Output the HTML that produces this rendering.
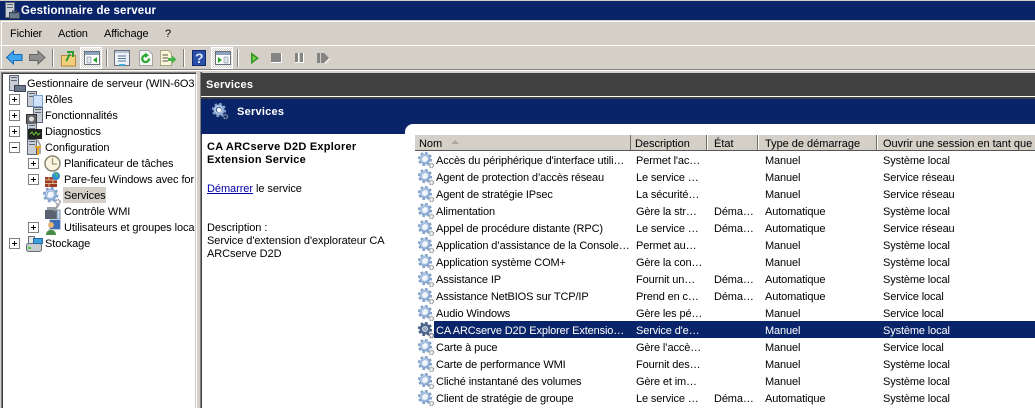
<!DOCTYPE html>
<html><head><meta charset="utf-8"><style>
html,body{margin:0;padding:0;background:#fff}
#p{position:relative;width:1035px;height:408px;overflow:hidden;background:#d4d0c8;font:11px "Liberation Sans",sans-serif;color:#000;letter-spacing:-.13px}
.a{position:absolute}
.t{position:absolute;white-space:nowrap;line-height:13px;height:13px;margin-top:1px}
#tree .t{letter-spacing:-.08px}
.d{letter-spacing:-.06px}
.b{font-weight:bold;letter-spacing:.25px}
.w{color:#fff}
.exp{position:absolute;width:9px;height:9px;border:1px solid #808080;background:#fff}
.exp:before{content:"";position:absolute;left:2px;top:4px;width:5px;height:1px;background:#000}
.exp.p:after{content:"";position:absolute;left:4px;top:2px;width:1px;height:5px;background:#000}
svg{position:absolute;overflow:visible}
.sep{position:absolute;top:49px;width:1px;height:18px;background:#808080;border-right:1px solid #fff}
.press{position:absolute;top:47px;height:20px;width:20px;border:1px solid #fff;background-color:#fff;background-image:conic-gradient(#d4d0c8 25%,#fff 0 50%,#d4d0c8 0 75%,#fff 0);background-size:2px 2px}
.h{position:absolute;top:135px;height:15px;background:#d4d0c8;border-right:1px solid #716f64;box-shadow:1px 0 #fff}
.hd{letter-spacing:-.02px}
</style></head><body><div id="p">
<svg width="0" height="0"><defs>
<g id="gear"><circle cx="7" cy="7" r="5.9" fill="none" stroke="#7f9fca" stroke-width="2.4" stroke-dasharray="2.5 2.13"/><circle cx="7" cy="7" r="4.2" fill="none" stroke="#8aa8d0" stroke-width="2.6"/><circle cx="6.5" cy="6.5" r="3.6" fill="none" stroke="#c2d5ec" stroke-width="1"/><circle cx="7" cy="7" r="2.3" fill="#f1f6fc"/><circle cx="13.5" cy="13.5" r="2" fill="none" stroke="#8f98a4" stroke-width="1.6" stroke-dasharray="1.2 .6"/></g>
<g id="gear2"><circle cx="7" cy="7" r="5.9" fill="none" stroke="#445a80" stroke-width="2.4" stroke-dasharray="2.5 2.13"/><circle cx="7" cy="7" r="4.2" fill="none" stroke="#4d648c" stroke-width="2.6"/><circle cx="7" cy="7" r="2.3" fill="#9aa9c2"/><circle cx="13.5" cy="13.5" r="2" fill="none" stroke="#606a7a" stroke-width="1.6" stroke-dasharray="1.2 .6"/></g>
<g id="srv"><rect x="2.5" y=".5" width="9" height="15" fill="#c9ced6" stroke="#5d6674"/><rect x="4" y="2" width="6" height="1" fill="#5d6674"/><rect x="4" y="5" width="6" height="1" fill="#5d6674"/></g>
</defs></svg>

<!-- title bar -->
<div class="a" style="left:0;top:1px;width:1035px;height:19px;background:#0a246a"></div>
<div class="a" style="left:0;top:0;width:1035px;height:1px;background:#d4d0c8"></div>
<div class="a" style="left:0;top:20px;width:1035px;height:1px;background:#d4d0c8"></div>
<div class="a" style="left:1px;top:21px;width:1034px;height:1px;background:#fff"></div>
<div class="a" style="left:1px;top:21px;width:1px;height:49px;background:#fff"></div>
<svg style="left:3px;top:2px" width="16" height="17"><use href="#srv"/><rect x="6.5" y="10.5" width="10" height="6" fill="#6b7a8c" stroke="#3a4454"/><rect x="9.5" y="9" width="4" height="2" fill="none" stroke="#3a4454"/></svg>
<div class="t b w" style="left:21px;top:4px;font-size:11.5px;letter-spacing:.15px">Gestionnaire de serveur</div>

<!-- menu -->
<div class="a" style="left:0;top:45px;width:1035px;height:1px;background:#fff"></div>
<div class="a" style="left:0;top:69px;width:1035px;height:1px;background:#808080"></div>
<div class="a" style="left:0;top:70px;width:1035px;height:1px;background:#fff"></div>
<div class="t" style="left:10px;top:27px">Fichier</div>
<div class="t" style="left:58px;top:27px">Action</div>
<div class="t" style="left:104px;top:27px">Affichage</div>
<div class="t" style="left:165px;top:27px">?</div>

<!-- toolbar -->
<svg style="left:6px;top:50px" width="17" height="15"><path d="M.5 7.5 7.5 1V4.5H16V10.5H7.5V14Z" fill="#3ea6ee" stroke="#1768b5"/></svg>
<svg style="left:29px;top:50px" width="17" height="15"><path d="M16 7.5 9 1V4.5H.5V10.5H9V14Z" fill="#8f8f8f" stroke="#666"/></svg>
<div class="sep" style="left:52px"></div>
<svg style="left:61px;top:49px" width="16" height="18"><path d="M.5 6.5H14.5V17H.5Z" fill="#f2cf7c" stroke="#b08a3a"/><path d="M5 12C7 10 7 7 9 5M6 3H12V8" fill="none" stroke="#2f9e2f" stroke-width="2"/></svg>
<div class="press" style="left:80px"></div>
<svg style="left:84px;top:51px" width="18" height="15"><rect x=".5" y=".5" width="15" height="13" fill="#fff" stroke="#66707c"/><rect x="1" y="1" width="14" height="3" fill="#8aa2bd"/><rect x="3" y="6" width="4" height="6" fill="#dfe7f0" stroke="#7f8b99" stroke-width=".6"/><path d="M13 6V12L9 9Z" fill="#26a326"/></svg>
<div class="sep" style="left:106px"></div>
<svg style="left:114px;top:50px" width="16" height="16"><rect x=".5" y=".5" width="15" height="15" fill="#eef2f6" stroke="#67717d"/><rect x="1" y="1" width="14" height="2" fill="#b4c3d4"/><path d="M4 6H12M4 8.5H12M4 11H12" stroke="#55779c"/><rect x="5" y="14" width="6" height="1.5" fill="#35b5e8"/></svg>
<svg style="left:139px;top:50px" width="14" height="16"><path d="M.5.5H9.5L13.5 4.5V15.5H.5Z" fill="#f6f6f6" stroke="#a5a5a5"/><path d="M10 8.5A3.4 3.4 0 1 1 7 5.3" fill="none" stroke="#29a72b" stroke-width="2.2"/><path d="M6 2.5 10 5.4 6 8Z" fill="#29a72b"/></svg>
<svg style="left:160px;top:50px" width="17" height="16"><path d="M.5.5H8.5L11.5 3.5V15.5H.5Z" fill="#fbf5d8" stroke="#a5a58a"/><path d="M2.5 5H8M2.5 8H8M2.5 11H8" stroke="#555"/><path d="M8 8H12V5.5L16.5 9.5 12 13.5V11H8Z" fill="#45b449"/></svg>
<div class="sep" style="left:183px"></div>
<svg style="left:192px;top:50px" width="14" height="16"><rect x=".5" y=".5" width="13" height="15" fill="#2a4fa8" stroke="#15296a"/><text x="3" y="13" font-family="Liberation Sans" font-size="14" font-weight="bold" fill="#dfe6f5">?</text></svg>
<div class="press" style="left:211px"></div>
<svg style="left:215px;top:51px" width="18" height="15"><rect x=".5" y=".5" width="15" height="13" fill="#fff" stroke="#66707c"/><rect x="1" y="1" width="14" height="3" fill="#8aa2bd"/><rect x="9" y="6" width="4" height="6" fill="#dfe7f0" stroke="#7f8b99" stroke-width=".6"/><path d="M3 6V12L7 9Z" fill="#26a326"/></svg>
<div class="sep" style="left:237px"></div>
<svg style="left:251px;top:53px" width="8" height="11"><path d="M.8.8V9.6L6.6 5.2Z" fill="#7fd04f" stroke="#2d9a1e" stroke-width="1.6"/></svg>
<div class="a" style="left:271px;top:53px;width:10px;height:9px;background:#848484;border-right:1px solid #fff;border-bottom:1px solid #fff"></div>
<div class="a" style="left:295px;top:53px;width:3px;height:9px;background:#848484;border-right:1px solid #fff;border-bottom:1px solid #fff"></div>
<div class="a" style="left:300px;top:53px;width:3px;height:9px;background:#848484;border-right:1px solid #fff;border-bottom:1px solid #fff"></div>
<svg style="left:317px;top:53px" width="14" height="11"><rect width="3" height="10" fill="#848484"/><path d="M4 0H7L12 5 7 10H4Z" fill="#848484"/><path d="M8 10.5 13 5.3" stroke="#fff"/></svg>

<!-- panes -->
<div class="a" style="left:1px;top:72px;width:1px;height:336px;background:#808080"></div>
<div class="a" style="left:2px;top:73px;width:1px;height:335px;background:#404040"></div>
<div class="a" style="left:1px;top:72px;width:195px;height:1px;background:#808080"></div>
<div class="a" style="left:2px;top:73px;width:194px;height:1px;background:#404040"></div>
<div class="a" style="left:3px;top:74px;width:192px;height:334px;background:#fff;overflow:hidden" id="tree">
 <div class="t" style="left:24px;top:3px;width:168px;overflow:hidden">Gestionnaire de serveur (WIN-6O3I</div>
 <svg style="left:4px;top:1px" width="18" height="17"><use href="#srv"/><rect x="7.5" y="10.5" width="11" height="6" fill="#6b7a8c" stroke="#3a4454"/></svg>
 <div class="exp p" style="left:6px;top:20px"></div><svg style="left:22px;top:17px" width="18" height="17"><use href="#srv"/><rect x="8.5" y="4.5" width="9" height="11" fill="#cfe2f8" stroke="#7aa0d0"/></svg><div class="t" style="left:42px;top:19px">Rôles</div>
 <div class="exp p" style="left:6px;top:36px"></div><svg style="left:22px;top:33px" width="18" height="17"><g transform="translate(6 0)"><use href="#srv"/></g><rect x="1.5" y="7.5" width="10" height="9" fill="#666" stroke="#333"/><circle cx="6.5" cy="12" r="2.5" fill="#ddd"/></svg><div class="t" style="left:42px;top:35px">Fonctionnalités</div>
 <div class="exp p" style="left:6px;top:52px"></div><svg style="left:22px;top:49px" width="18" height="17"><use href="#srv"/><rect x="3" y="6" width="14" height="10" fill="#222"/><path d="M5 11 7 9 9 12 11 9 13 12 15 10" fill="none" stroke="#6c3"/></svg><div class="t" style="left:42px;top:51px">Diagnostics</div>
 <div class="exp" style="left:6px;top:68px"></div><svg style="left:22px;top:65px" width="18" height="17"><use href="#srv"/><path d="M12 0 15 6V15" stroke="#aaa" stroke-width="2" fill="none"/><path d="M10 7H16V9H14V16H12V9H10Z" fill="#e8a317"/></svg><div class="t" style="left:42px;top:67px">Configuration</div>
 <div class="exp p" style="left:25px;top:84px"></div><svg style="left:41px;top:81px" width="17" height="17"><circle cx="8.5" cy="8.5" r="7.5" fill="#fbf6e4" stroke="#8b8470" stroke-width="1.5"/><path d="M8.5 3V9H13" fill="none" stroke="#a59a70" stroke-width="1.3"/></svg><div class="t" style="left:61px;top:83px">Planificateur de tâches</div>
 <div class="exp p" style="left:25px;top:100px"></div><svg style="left:41px;top:97px" width="17" height="17"><rect x="1" y="6" width="12" height="10" fill="#9a3b22"/><path d="M1 9H13M1 12.5H13M5 6V9M9 9V12.5M5 12.5V16" stroke="#e0b090"/><circle cx="12" cy="5" r="4" fill="#2d8fd5"/><path d="M10 3H13V6" stroke="#6c3" fill="none"/></svg><div class="t" style="left:61px;top:99px">Pare-feu Windows avec for</div>
 <div class="a" style="left:60px;top:113px;width:43px;height:16px;background:#d4d0c8"></div>
 <svg style="left:40px;top:113px" width="17" height="17"><g transform="scale(1.1)"><use href="#gear"/></g></svg><div class="t" style="left:61px;top:115px">Services</div>
 <svg style="left:41px;top:129px" width="17" height="17"><rect x="1" y="7" width="13" height="9" fill="#59636f"/><rect x="3" y="4" width="8" height="3" fill="#9aa3ad"/><path d="M10 8 15 1" stroke="#999" stroke-width="2"/><rect x="13" y="7" width="3" height="9" fill="#cfe0f3" stroke="#7b8ea3"/></svg><div class="t" style="left:61px;top:131px">Contrôle WMI</div>
 <div class="exp p" style="left:25px;top:148px"></div><svg style="left:41px;top:145px" width="17" height="17"><rect x="5.5" y=".5" width="11" height="10" fill="#3a6cb8" stroke="#c5cdd8"/><circle cx="7" cy="6" r="3" fill="#e4b57a"/><path d="M2 16C2 9 12 9 12 16Z" fill="#4a8c46"/></svg><div class="t" style="left:61px;top:147px">Utilisateurs et groupes loca</div>
 <div class="exp p" style="left:6px;top:164px"></div><svg style="left:22px;top:161px" width="18" height="17"><rect x="1.5" y="8.5" width="15" height="8" rx="2" fill="#c6cbd0" stroke="#6a7078"/><rect x="3.5" y="1.5" width="6" height="7" fill="#e4e7ea" stroke="#6a7078"/><rect x="8.5" y="3.5" width="9" height="5" fill="#3aa0de" stroke="#2a6aa0"/><rect x="3" y="12" width="3" height="2" fill="#4c3"/></svg><div class="t" style="left:42px;top:163px">Stockage</div>
</div>
<div class="a" style="left:195px;top:74px;width:1px;height:334px;background:#c8c8c8"></div>
<div class="a" style="left:196px;top:74px;width:1px;height:334px;background:#fff"></div>
<div class="a" style="left:200px;top:72px;width:1px;height:336px;background:#808080"></div>
<div class="a" style="left:201px;top:72px;width:1px;height:336px;background:#404040"></div>

<!-- right header -->
<div class="a" style="left:201px;top:73px;width:834px;height:23px;background:#404040"></div>
<div class="a" style="left:201px;top:96px;width:834px;height:1px;background:#fff"></div>
<div class="a" style="left:201px;top:97px;width:834px;height:2px;background:#404040"></div>
<div class="a" style="left:201px;top:99px;width:834px;height:36px;background:#0a246a"></div>
<div class="t b w" style="left:206px;top:78px">Services</div>
<svg style="left:212px;top:103px" width="17" height="17"><use href="#gear"/></svg>
<div class="t b w" style="left:237px;top:105px">Services</div>
<div class="a" style="left:202px;top:134px;width:210px;height:274px;background:#fff"></div>
<div class="a" style="left:405px;top:124px;width:630px;height:284px;background:#fff;border-top-left-radius:8px"></div>

<div class="t b" style="left:207px;top:140px">CA ARCserve D2D Explorer</div>
<div class="t b" style="left:207px;top:153px">Extension Service</div>
<div class="t d" style="left:207px;top:182px"><span style="color:#00a;text-decoration:underline">Démarrer</span> le service</div>
<div class="t d" style="left:207px;top:221px">Description :</div>
<div class="t d" style="left:207px;top:234px">Service d'extension d'explorateur CA</div>
<div class="t d" style="left:207px;top:247px">ARCserve D2D</div>

<!-- list header -->
<div class="h" style="left:415px;width:215px"></div>
<div class="h" style="left:631px;width:75px"></div>
<div class="h" style="left:708px;width:49px"></div>
<div class="h" style="left:759px;width:117px"></div>
<div class="h" style="left:878px;width:157px;border-right:0;box-shadow:none"></div>
<div class="a" style="left:415px;top:150px;width:620px;height:1px;background:#555"></div>
<svg style="left:451px;top:140px" width="9" height="5"><path d="M0 4H8L4 0Z" fill="#aca899"/></svg>
<div class="t hd" style="left:419px;top:137px">Nom</div>
<div class="t hd" style="left:635px;top:137px">Description</div>
<div class="t hd" style="left:714px;top:137px">État</div>
<div class="t hd" style="left:765px;top:137px">Type de démarrage</div>
<div class="t hd" style="left:883px;top:137px">Ouvrir une session en tant que</div>

<!-- rows -->
<div class="a" style="left:434px;top:321px;width:601px;height:17px;background:#0a246a"></div>
<svg style="left:418px;top:152px" width="17" height="256">
<use href="#gear" y="0"/><use href="#gear" y="17"/><use href="#gear" y="34"/><use href="#gear" y="51"/><use href="#gear" y="68"/><use href="#gear" y="85"/><use href="#gear" y="102"/><use href="#gear" y="119"/><use href="#gear" y="136"/><use href="#gear" y="153"/><use href="#gear2" y="170"/><use href="#gear" y="187"/><use href="#gear" y="204"/><use href="#gear" y="221"/><use href="#gear" y="238"/>
</svg>
<div class="t" style="left:436px;top:154px">Accès du périphérique d'interface utili…</div><div class="t" style="left:636px;top:154px">Permet l'ac…</div><div class="t" style="left:765px;top:154px">Manuel</div><div class="t" style="left:883px;top:154px">Système local</div>
<div class="t" style="left:436px;top:171px">Agent de protection d’accès réseau</div><div class="t" style="left:636px;top:171px">Le service …</div><div class="t" style="left:765px;top:171px">Manuel</div><div class="t" style="left:883px;top:171px">Service réseau</div>
<div class="t" style="left:436px;top:188px">Agent de stratégie IPsec</div><div class="t" style="left:636px;top:188px">La sécurité…</div><div class="t" style="left:765px;top:188px">Manuel</div><div class="t" style="left:883px;top:188px">Service réseau</div>
<div class="t" style="left:436px;top:205px">Alimentation</div><div class="t" style="left:636px;top:205px">Gère la str…</div><div class="t" style="left:714px;top:205px">Déma…</div><div class="t" style="left:765px;top:205px">Automatique</div><div class="t" style="left:883px;top:205px">Système local</div>
<div class="t" style="left:436px;top:222px">Appel de procédure distante (RPC)</div><div class="t" style="left:636px;top:222px">Le service …</div><div class="t" style="left:714px;top:222px">Déma…</div><div class="t" style="left:765px;top:222px">Automatique</div><div class="t" style="left:883px;top:222px">Service réseau</div>
<div class="t" style="left:436px;top:239px">Application d’assistance de la Console…</div><div class="t" style="left:636px;top:239px">Permet au…</div><div class="t" style="left:765px;top:239px">Manuel</div><div class="t" style="left:883px;top:239px">Système local</div>
<div class="t" style="left:436px;top:256px">Application système COM+</div><div class="t" style="left:636px;top:256px">Gère la con…</div><div class="t" style="left:765px;top:256px">Manuel</div><div class="t" style="left:883px;top:256px">Système local</div>
<div class="t" style="left:436px;top:273px">Assistance IP</div><div class="t" style="left:636px;top:273px">Fournit un…</div><div class="t" style="left:714px;top:273px">Déma…</div><div class="t" style="left:765px;top:273px">Automatique</div><div class="t" style="left:883px;top:273px">Système local</div>
<div class="t" style="left:436px;top:290px">Assistance NetBIOS sur TCP/IP</div><div class="t" style="left:636px;top:290px">Prend en c…</div><div class="t" style="left:714px;top:290px">Déma…</div><div class="t" style="left:765px;top:290px">Automatique</div><div class="t" style="left:883px;top:290px">Service local</div>
<div class="t" style="left:436px;top:307px">Audio Windows</div><div class="t" style="left:636px;top:307px">Gère les pé…</div><div class="t" style="left:765px;top:307px">Manuel</div><div class="t" style="left:883px;top:307px">Service local</div>
<div class="t w" style="left:436px;top:324px">CA ARCserve D2D Explorer Extensio…</div><div class="t w" style="left:636px;top:324px">Service d'e…</div><div class="t w" style="left:765px;top:324px">Manuel</div><div class="t w" style="left:883px;top:324px">Système local</div>
<div class="t" style="left:436px;top:341px">Carte à puce</div><div class="t" style="left:636px;top:341px">Gère l’accè…</div><div class="t" style="left:765px;top:341px">Manuel</div><div class="t" style="left:883px;top:341px">Service local</div>
<div class="t" style="left:436px;top:358px">Carte de performance WMI</div><div class="t" style="left:636px;top:358px">Fournit des…</div><div class="t" style="left:765px;top:358px">Manuel</div><div class="t" style="left:883px;top:358px">Système local</div>
<div class="t" style="left:436px;top:375px">Cliché instantané des volumes</div><div class="t" style="left:636px;top:375px">Gère et im…</div><div class="t" style="left:765px;top:375px">Manuel</div><div class="t" style="left:883px;top:375px">Système local</div>
<div class="t" style="left:436px;top:392px">Client de stratégie de groupe</div><div class="t" style="left:636px;top:392px">Le service …</div><div class="t" style="left:714px;top:392px">Déma…</div><div class="t" style="left:765px;top:392px">Automatique</div><div class="t" style="left:883px;top:392px">Système local</div>
</div></body></html>
